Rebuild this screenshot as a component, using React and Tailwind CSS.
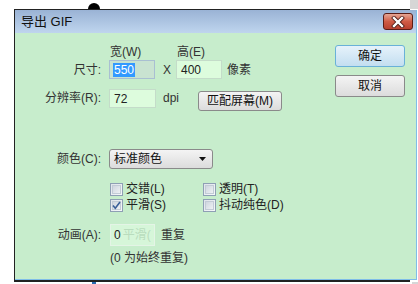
import React from "react";

const font = { fontFamily: '"Liberation Sans","Noto Sans CJK SC",sans-serif' };

function Checkbox({ checked, label }) {
  return (
    <div className="flex h-[16px] items-center">
      <div className="relative flex h-[13px] w-[13px] items-center justify-center border border-[#8e9fb4] bg-gradient-to-br from-[#dfe4ea] to-[#f6f8fa]">
        <div className="absolute inset-[1px] border border-[#c2cbd6] bg-gradient-to-br from-[#cfd6df] to-[#eef1f4]" />
        {checked && (
          <svg viewBox="0 0 11 11" className="relative h-[11px] w-[11px]">
            <path d="M2 5.5 L4.3 8.3 L9 2" fill="none" stroke="#3a5f99" strokeWidth="1.6" />
          </svg>
        )}
      </div>
      <span className="ml-[3px] text-[12px] leading-[16px] text-[#222]">{label}</span>
    </div>
  );
}

export default function App() {
  return (
    <div className="relative h-[284px] w-[418px] overflow-hidden bg-white" style={font}>
      <div className="absolute right-0 top-0 h-[9px] w-[8px] bg-[#d6d6d6]" />
      <div className="absolute left-[88px] top-[3px] h-[6px] w-[12px] rounded-t-full bg-black" />
      <div className="absolute left-[92px] top-[282px] h-[2px] w-[4px] bg-[#2a6ab0]" />
      <div className="absolute left-[412px] top-[282px] h-[2px] w-[6px] bg-[#d6d6d6]" />

      <div className="ml-[14px] mt-[9px] flex h-[273px] w-[403px] flex-col">
        <div className="h-[1px] w-[396px] bg-[#222]" />
        <div className="flex flex-1 flex-col border-l border-l-[#222] border-r border-r-[#7fbde8]">
          <div className="flex h-[23px] items-center bg-gradient-to-b from-[#9ab3d5] to-[#bfd5ee] pl-[6px] pr-[3px]">
            <span className="text-[13px] leading-[16px] text-[#111]">导出 GIF</span>
            <div className="ml-auto flex h-[17px] w-[30px] items-center justify-center rounded-[3px] border border-[#5b1d16] bg-gradient-to-b from-[#e5a695] via-[#cf5b45] to-[#b8412f]">
              <svg viewBox="0 0 14 12" className="h-[12px] w-[14px]">
                <path d="M3 2 L11 10 M11 2 L3 10" stroke="#4a1a14" strokeWidth="4" strokeLinecap="square" />
                <path d="M3 2 L11 10 M11 2 L3 10" stroke="#ffffff" strokeWidth="2.4" strokeLinecap="square" />
              </svg>
            </div>
          </div>

          <div className="flex flex-1 bg-[#c7edcc] text-[12px] text-[#333]">
            <div className="flex flex-col">
              <div className="mt-[12px] flex h-[15px] items-center pl-[95px] leading-[15px]">
                <span className="w-[67px]">宽(W)</span>
                <span>高(E)</span>
              </div>

              <div className="flex h-[19px] items-center">
                <span className="w-[86px] text-right">尺寸:</span>
                <div className="ml-[8px] flex h-[19px] w-[46px] items-center border border-[#a9bfd2] bg-[#c9e3d1] pl-[3px]">
                  <span className="bg-[#3399ff] px-[1px] leading-[14px] text-white">550</span>
                </div>
                <span className="ml-[8px] w-[7px]">X</span>
                <div className="ml-[6px] flex h-[19px] w-[46px] items-center border border-[#c4dcc9] bg-[#ddfcdd] pl-[4px] text-[#222]">
                  400
                </div>
                <span className="ml-[5px]">像素</span>
              </div>

              <div className="mt-[10px] flex h-[22px] items-start">
                <span className="w-[86px] text-right leading-[19px]">分辨率(R):</span>
                <div className="ml-[8px] flex h-[19px] w-[47px] items-center border border-[#c4dcc9] bg-[#ddfcdd] pl-[4px] text-[#222]">
                  72
                </div>
                <span className="ml-[7px] leading-[19px]">dpi</span>
                <div className="ml-[19px] mt-[2px] flex h-[20px] w-[84px] items-center justify-center rounded-[3px] border border-[#8a8a8a] bg-gradient-to-b from-[#f4f4f4] to-[#dcdcdc] text-[#111]">
                  匹配屏幕(M)
                </div>
              </div>

              <div className="mt-[38px] flex h-[20px] items-center">
                <span className="w-[86px] text-right">颜色(C):</span>
                <div className="ml-[8px] flex h-[20px] w-[104px] items-center rounded-[3px] border border-[#8a8a8a] bg-gradient-to-b from-[#f4f4f4] to-[#dcdcdc] pl-[4px] pr-[6px] text-[#111]">
                  <span>标准颜色</span>
                  <svg viewBox="0 0 7 4" className="ml-auto h-[4px] w-[7px]">
                    <path d="M0 0 L7 0 L3.5 4 Z" fill="#111" />
                  </svg>
                </div>
              </div>

              <div className="ml-[95px] mt-[12px] grid grid-cols-[93px_auto]">
                <Checkbox label="交错(L)" />
                <Checkbox label="透明(T)" />
                <Checkbox checked label="平滑(S)" />
                <Checkbox label="抖动纯色(D)" />
              </div>

              <div className="mt-[11px] flex h-[22px] items-center">
                <span className="w-[86px] text-right">动画(A):</span>
                <div className="ml-[9px] flex h-[22px] w-[45px] items-center overflow-hidden border border-[#e4f4e6] bg-[#d6f6d9] pl-[3px]">
                  <span className="text-[#222]">0</span>
                  <span className="ml-[2px] whitespace-nowrap text-[#b9dcbd]">平滑(</span>
                </div>
                <span className="ml-[6px]">重复</span>
              </div>

              <div className="ml-[95px] mt-[5px] leading-[14px]">(0 为始终重复)</div>
            </div>

            <div className="ml-auto mr-[11px] flex w-[70px] flex-col gap-[8px] pt-[12px] text-[#111]">
              <div className="flex h-[22px] items-center justify-center rounded-[3px] border border-[#69b1d8] bg-gradient-to-b from-[#e6f2fb] to-[#c3def0]">
                确定
              </div>
              <div className="flex h-[22px] items-center justify-center rounded-[3px] border border-[#8a8a8a] bg-gradient-to-b from-[#f4f4f4] to-[#dcdcdc]">
                取消
              </div>
            </div>
          </div>
          <div className="h-[1px] bg-[#7fbde8]" />
        </div>
        <div className="h-[2px] w-[396px] bg-[#222]" />
      </div>
    </div>
  );
}
